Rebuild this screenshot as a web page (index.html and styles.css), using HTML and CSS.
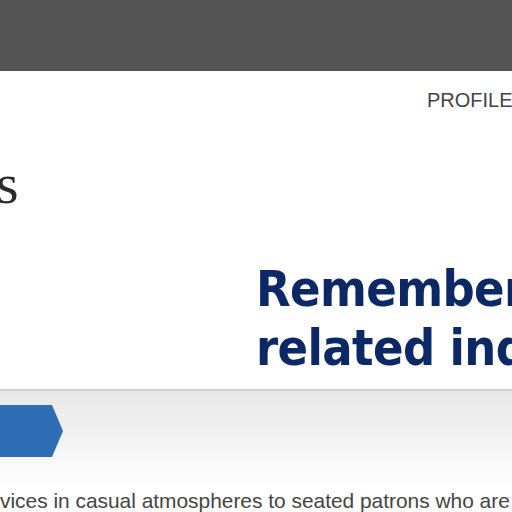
FILE: index.html
```html
<!DOCTYPE html>
<html>
<head>
<meta charset="utf-8">
<link rel="stylesheet" href="styles.css">
</head>
<body>
<div class="topbar"></div>
<nav class="nav"><span class="nav-item">PROFILES</span></nav>
<div class="brand"><span class="brand-text">s</span></div>
<section class="hero">
  <h1 class="hero-title">Remember<br>related industries</h1>
</section>
<section class="band">
  <div class="tab"></div>
  <p class="desc">vices in casual atmospheres to seated patrons who are served</p>
</section>
</body>
</html>
```
FILE: styles.css
```css
html, body {
  margin: 0;
  padding: 0;
  background: #fff;
  overflow: hidden;
}
body {
  width: 512px;
  height: 512px;
  font-family: "Liberation Sans", Arial, sans-serif;
}
.topbar {
  height: 71px;
  background: #555555;
}
.nav {
  display: flex;
  padding-left: 427px;
  padding-top: 19px;
  height: 40px;
  box-sizing: border-box;
  white-space: nowrap;
}
.nav-item {
  font-size: 20px;
  line-height: 20px;
  color: #444;
}
.brand {
  height: 103px;
  padding-top: 58px;
  box-sizing: border-box;
  white-space: nowrap;
}
.brand-text {
  font-family: "Liberation Serif", "Times New Roman", serif;
  font-size: 58px;
  line-height: 30px;
  color: #2b2b2b;
  display: block;
  margin-left: -4px;
}
.hero {
  height: 177px;
  box-sizing: border-box;
  border-bottom: 2px solid #d0d0d0;
  padding-left: 256px;
  padding-top: 46px;
  overflow: hidden;
  white-space: nowrap;
}
.hero-title {
  margin: 0;
  font-family: "DejaVu Sans", Verdana, sans-serif;
  font-stretch: condensed;
  font-weight: bold;
  font-size: 50px;
  line-height: 59px;
  letter-spacing: -0.6px;
  color: #0c2865;
}
.band {
  height: 122px;
  background: linear-gradient(#e8e8e8 0px, #fafafa 80px, #fff 100px);
  padding-top: 14px;
  box-sizing: border-box;
}
.tab {
  width: 63px;
  height: 52px;
  background: #2f6db4;
  clip-path: polygon(0 0, 52px 0, 63px 50%, 52px 100%, 0 100%);
}
.desc {
  margin: 32px 0 0 0;
  font-size: 20.9px;
  line-height: 24px;
  color: #444;
  white-space: nowrap;
}
```
